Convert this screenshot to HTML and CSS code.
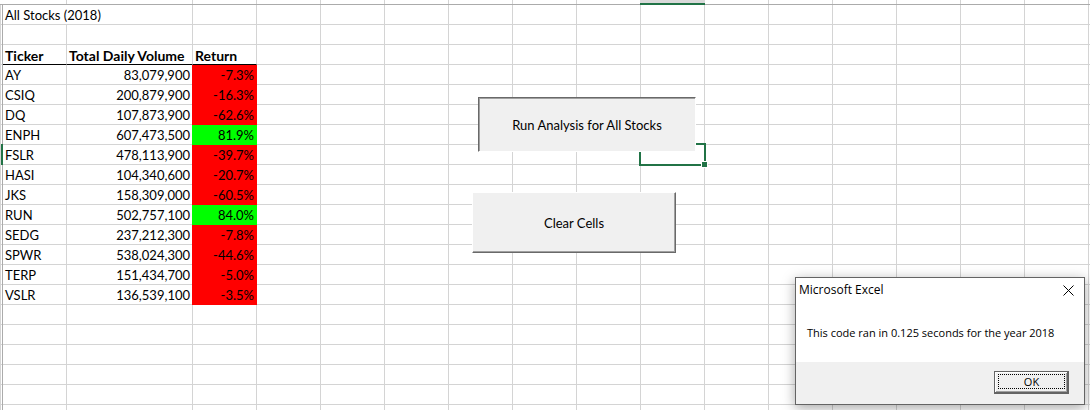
FILE: index.html
```html
<!DOCTYPE html>
<html lang="en">
<head>
<meta charset="utf-8">
<title>All Stocks (2018)</title>
<link rel="stylesheet" href="styles.css">
</head>
<body>
<main class="sheet">
  <div class="col-heads">
    <span class="head-corner"></span><span class="head head-a"></span><span class="head head-b"></span><span class="head"></span>
    <span class="head"></span><span class="head"></span><span class="head"></span><span class="head"></span><span class="head"></span><span class="head"></span>
    <span class="head head-active"></span>
    <span class="head"></span><span class="head"></span><span class="head"></span><span class="head"></span><span class="head"></span><span class="head"></span>
  </div>
  <div class="grid">
    <div class="row-heads"><div class="row-active"></div></div>
    <table class="stocks">
      <colgroup><col class="col-a"><col class="col-b"><col class="col-c"></colgroup>
      <tbody>
        <tr><td colspan="2">All Stocks (2018)</td><td></td></tr>
        <tr><td></td><td></td><td></td></tr>
        <tr class="titles"><th scope="col">Ticker</th><th scope="col">Total Daily Volume</th><th scope="col">Return</th></tr>
        <tr><td>AY</td><td class="num">83,079,900</td><td class="ret down">-7.3%</td></tr>
        <tr><td>CSIQ</td><td class="num">200,879,900</td><td class="ret down">-16.3%</td></tr>
        <tr><td>DQ</td><td class="num">107,873,900</td><td class="ret down">-62.6%</td></tr>
        <tr><td>ENPH</td><td class="num">607,473,500</td><td class="ret up">81.9%</td></tr>
        <tr><td>FSLR</td><td class="num">478,113,900</td><td class="ret down">-39.7%</td></tr>
        <tr><td>HASI</td><td class="num">104,340,600</td><td class="ret down">-20.7%</td></tr>
        <tr><td>JKS</td><td class="num">158,309,000</td><td class="ret down">-60.5%</td></tr>
        <tr><td>RUN</td><td class="num">502,757,100</td><td class="ret up">84.0%</td></tr>
        <tr><td>SEDG</td><td class="num">237,212,300</td><td class="ret down">-7.8%</td></tr>
        <tr><td>SPWR</td><td class="num">538,024,300</td><td class="ret down">-44.6%</td></tr>
        <tr><td>TERP</td><td class="num">151,434,700</td><td class="ret down">-5.0%</td></tr>
        <tr><td>VSLR</td><td class="num">136,539,100</td><td class="ret down">-3.5%</td></tr>
        <tr><td></td><td></td><td></td></tr>
        <tr><td></td><td></td><td></td></tr>
        <tr><td></td><td></td><td></td></tr>
        <tr><td></td><td></td><td></td></tr>
        <tr><td></td><td></td><td></td></tr>
        <tr><td></td><td></td><td></td></tr>
      </tbody>
    </table>
  </div>

  <div class="selection"><span class="fill-handle"></span></div>
  <button class="sheet-button run" type="button">Run Analysis for All Stocks</button>
  <button class="sheet-button clear" type="button">Clear Cells</button>

  <section class="dialog" role="dialog" aria-labelledby="dialog-title">
    <header class="dialog-bar">
      <h1 class="dialog-title" id="dialog-title">Microsoft Excel</h1>
      <button class="dialog-close" type="button" aria-label="Close">
        <svg width="11" height="11" viewBox="0 0 11 11"><path d="M.5.5l10 10M10.5.5l-10 10" fill="none" stroke="#000" stroke-width="1"/></svg>
      </button>
    </header>
    <p class="dialog-text">This code ran in 0.125 seconds for the year 2018</p>
    <footer class="dialog-foot"><button class="ok" type="button"><span class="ok-focus">OK</span></button></footer>
  </section>
</main>
</body>
</html>
```
FILE: styles.css
```css
* { box-sizing: border-box; }

body {
  margin: 0;
  background: #fff;
  color: #000;
  font: 13px/19px Lato, Carlito, sans-serif;
}

.sheet {
  position: relative;
  height: 100vh;
  overflow: hidden;
  background-image:
    linear-gradient(to right, #d4d4d4 1px, transparent 1px),
    linear-gradient(to bottom, #d4d4d4 1px, transparent 1px);
  background-size: 64px 20px;
  background-position: 0 4px;
}

.col-heads {
  display: flex;
  height: 5px;
  background: #fff;
  border-bottom: 1px solid #ababab;
}
.head-corner { flex: none; width: 3px; }
.head { flex: none; width: 64px; border-right: 1px solid #d4d4d4; }
.head-b { width: 126px; }
.head-active {
  width: 65px;
  height: 5px;
  margin-left: -1px;
  background: #d9d9d9;
  border-right: 0;
  border-bottom: 2px solid #217346;
}

.grid { display: flex; }
.row-heads {
  flex: none;
  width: 3px;
  padding-top: 139px;
  border-right: 1px solid #ababab;
}
.row-active { width: 3px; height: 21px; border-right: 2px solid #217346; }

.stocks {
  width: 254px;
  table-layout: fixed;
  border-collapse: separate;
  border-spacing: 0;
  background: #fff;
}
.col-a { width: 64px; }
.col-b { width: 126px; }
.col-c { width: 64px; }
.stocks td, .stocks th {
  height: 20px;
  padding: 2px 2px 0;
  border-right: 1px solid #d4d4d4;
  border-bottom: 1px solid #d4d4d4;
  text-align: left;
  white-space: nowrap;
  line-height: 17px;
}
.stocks .titles th {
  border-bottom-color: #000;
  font-size: 14px;
  font-weight: 700;
}
.stocks .num, .stocks .ret { text-align: right; }
.stocks .down { background: #f00; border-color: #f00; box-shadow: -1px 0 #f00; }
.stocks .up { background: #0f0; border-color: #0f0; box-shadow: -1px 0 #0f0; }

.selection {
  position: absolute;
  left: 639px;
  top: 143px;
  width: 67px;
  height: 23px;
  border: 2px solid #217346;
  background: #fff;
}
.fill-handle {
  position: absolute;
  right: -4px;
  bottom: -4px;
  width: 7px;
  height: 7px;
  background: #217346;
  border: 1px solid #fff;
}

.sheet-button {
  position: absolute;
  padding: 1px 0 0;
  border: 1px solid #fff;
  background: #f0f0f0;
  color: #000;
  font: inherit;
}
.run {
  left: 478px;
  top: 97px;
  width: 218px;
  height: 55px;
  border-top-color: #696969;
  border-left-color: #696969;
  box-shadow: inset 1px 1px #a0a0a0;
}
.clear {
  left: 472px;
  top: 192px;
  width: 204px;
  height: 61px;
  border-right-color: #696969;
  border-bottom-color: #696969;
  box-shadow: inset -1px -1px #a0a0a0;
}

.dialog {
  position: absolute;
  left: 795px;
  top: 277px;
  width: 290px;
  border: 1px solid #646464;
  background: #fff;
  box-shadow: 0 3px 12px rgba(0, 0, 0, .35);
  font: 11px/16px "Open Sans", "Noto Sans", sans-serif;
}
.dialog-bar {
  display: flex;
  justify-content: space-between;
  align-items: center;
  height: 24px;
  padding: 0 10px 0 3px;
}
.dialog-title { margin: 0; font: inherit; font-size: 12px; }
.dialog-close {
  display: flex;
  padding: 0;
  border: 0;
  background: none;
}
.dialog-text { margin: 0; padding: 23px 11px 21px; white-space: nowrap; }
.dialog-foot {
  display: flex;
  justify-content: flex-end;
  padding: 9px 15px 10px;
  background: #f0f0f0;
}
.ok {
  display: flex;
  width: 75px;
  height: 23px;
  padding: 2px 2px 3px 2px;
  border: 1px solid #646464;
  border-right-width: 2px;
  border-bottom-width: 2px;
  background: #f0f0f0;
  box-shadow: inset 1px 1px #fff, inset -1px -1px #a0a0a0;
  color: #000;
  font: inherit;
}
.ok-focus {
  flex: 1;
  margin-left: 1px;
  border: 1px dotted #000;
  line-height: 14px;
}
```
